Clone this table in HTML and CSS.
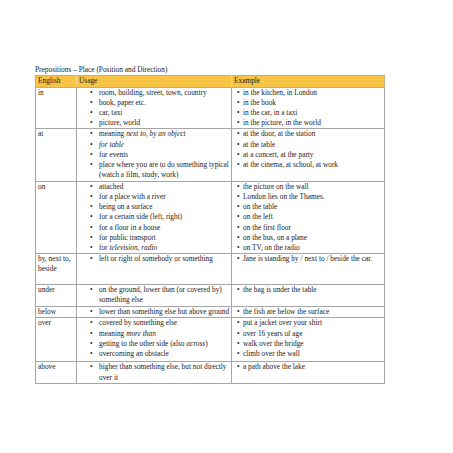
FILE: index.html
```html
<!DOCTYPE html>
<html>
<head>
<meta charset="utf-8">
<link rel="stylesheet" href="styles.css">
</head>
<body>
<div class="page">
  <div class="title">Prepositions – Place (Position and Direction)</div>
  <table class="prep">
    <colgroup><col class="c1"><col class="c2"><col class="c3"></colgroup>
    <thead>
      <tr class="head"><th>English</th><th>Usage</th><th>Example</th></tr>
    </thead>
    <tbody>
      <tr class="r-in">
        <td>in</td>
        <td><ul class="use"><li>room, building, street, town, country</li><li>book, paper etc.</li><li>car, taxi</li><li>picture, world</li></ul></td>
        <td><ul class="ex"><li>in the kitchen, in London</li><li>in the book</li><li>in the car, in a taxi</li><li>in the picture, in the world</li></ul></td>
      </tr>
      <tr class="r-at">
        <td>at</td>
        <td><ul class="use"><li>meaning <i>next to, by an object</i></li><li><i>for table</i></li><li>for events</li><li>place where you are to do something typical<br>(watch a film, study, work)</li></ul></td>
        <td><ul class="ex"><li>at the door, at the station</li><li>at the table</li><li>at a concert, at the party</li><li>at the cinema, at school, at work</li></ul></td>
      </tr>
      <tr class="r-on">
        <td>on</td>
        <td><ul class="use"><li>attached</li><li>for a place with a river</li><li>being on a surface</li><li>for a certain side (left, right)</li><li>for a floor in a house</li><li>for public transport</li><li>for <i>television, radio</i></li></ul></td>
        <td><ul class="ex"><li>the picture on the wall</li><li>London lies on the Thames.</li><li>on the table</li><li>on the left</li><li>on the first floor</li><li>on the bus, on a plane</li><li>on TV, on the radio</li></ul></td>
      </tr>
      <tr class="r-by">
        <td>by, next to,<br>beside</td>
        <td><ul class="use"><li>left or right of somebody or something</li></ul></td>
        <td><ul class="ex"><li>Jane is standing by / next to / beside the car.</li></ul></td>
      </tr>
      <tr class="r-under">
        <td>under</td>
        <td><ul class="use"><li>on the ground, lower than (or covered by)<br>something else</li></ul></td>
        <td><ul class="ex"><li>the bag is under the table</li></ul></td>
      </tr>
      <tr class="r-below">
        <td>below</td>
        <td><ul class="use"><li>lower than something else but above ground</li></ul></td>
        <td><ul class="ex"><li>the fish are below the surface</li></ul></td>
      </tr>
      <tr class="r-over">
        <td>over</td>
        <td><ul class="use"><li>covered by something else</li><li>meaning <i>more than</i></li><li>getting to the other side (also <i>across</i>)</li><li>overcoming an obstacle</li></ul></td>
        <td><ul class="ex"><li>put a jacket over your shirt</li><li>over 16 years of age</li><li>walk over the bridge</li><li>climb over the wall</li></ul></td>
      </tr>
      <tr class="r-above">
        <td>above</td>
        <td><ul class="use"><li>higher than something else, but not directly<br>over it</li></ul></td>
        <td><ul class="ex"><li>a path above the lake</li></ul></td>
      </tr>
    </tbody>
  </table>
</div>
</body>
</html>
```
FILE: styles.css
```css
html, body {
  margin: 0;
  padding: 0;
  background: #ffffff;
}
.page {
  padding: 64px 0 0 35px;
  font-family: "Liberation Serif", "Times New Roman", serif;
  font-size: 7.35px;
  line-height: 10.2px;
  color: #1c1c1c;
}
.title {
  height: 11px;
  line-height: 11px;
  white-space: nowrap;
}
.prep {
  border-collapse: collapse;
  table-layout: fixed;
  width: 349px;
}
.c1 { width: 41px; }
.c2 { width: 155px; }
.c3 { width: 153px; }
.prep th {
  background: #f8c445;
  font-weight: normal;
  text-align: left;
  padding: 0 0 0 2px;
  height: 10.5px;
  line-height: 10.5px;
  border: 1px solid #d6ad52;
  border-left-color: #f2d58c;
  border-right-color: #f2d58c;
}
.prep th:first-child { border-left-color: #c9b07a; }
.prep th:last-child { border-right-color: #c9b07a; }
.prep td {
  vertical-align: top;
  padding: 0 0 0 2px;
  border: 1px solid #a6a6a6;
  white-space: nowrap;
}
.prep td:first-child { white-space: normal; }
ul {
  list-style: none;
  margin: 0;
  padding: 0;
}
li::before {
  content: "•";
  display: inline-block;
  text-indent: 0;
}
.use li { padding-left: 20px; text-indent: -9px; }
.use li::before { width: 9px; }
.ex li { padding-left: 9px; text-indent: -6px; }
.ex li::before { width: 6px; }
.r-in { height: 41px; }
.r-at { height: 52.5px; }
.r-on { height: 71.5px; }
.r-by { height: 30.5px; }
.r-under { height: 22.5px; }
.r-below { height: 11px; }
.r-over { height: 44px; }
.r-above { height: 21.5px; }
```
